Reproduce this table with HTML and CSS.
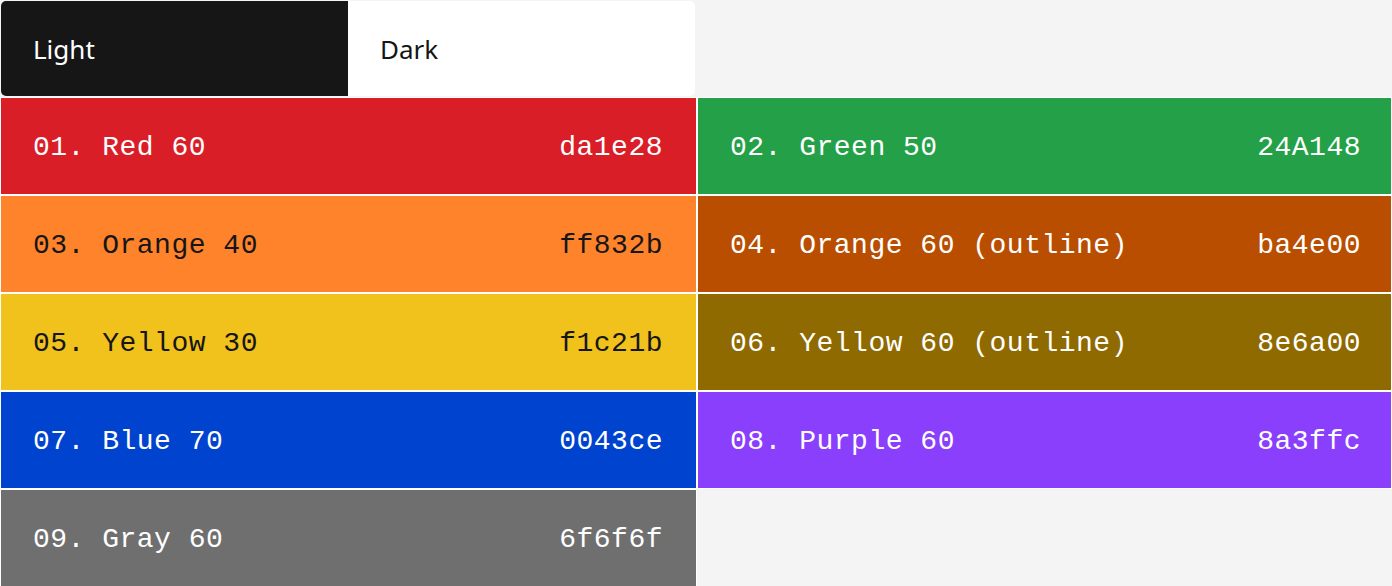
FILE: index.html
```html
<!DOCTYPE html>
<html>
<head>
<meta charset="utf-8">
<link rel="stylesheet" href="styles.css">
</head>
<body>
<div class="page">
  <div class="tabs">
    <div class="tab tab-selected">Light</div>
    <div class="tab">Dark</div>
  </div>
  <div class="grid">
    <div class="swatch red"><span>01. Red 60</span><span>da1e28</span></div>
    <div class="swatch green"><span>02. Green 50</span><span>24A148</span></div>
    <div class="swatch orange40 dark-text"><span>03. Orange 40</span><span>ff832b</span></div>
    <div class="swatch orange60"><span>04. Orange 60 (outline)</span><span>ba4e00</span></div>
    <div class="swatch yellow30 dark-text"><span>05. Yellow 30</span><span>f1c21b</span></div>
    <div class="swatch yellow60"><span>06. Yellow 60 (outline)</span><span>8e6a00</span></div>
    <div class="swatch blue"><span>07. Blue 70</span><span>0043ce</span></div>
    <div class="swatch purple"><span>08. Purple 60</span><span>8a3ffc</span></div>
    <div class="swatch gray"><span>09. Gray 60</span><span>6f6f6f</span></div>
  </div>
</div>
</body>
</html>
```

FILE: styles.css
```css
html, body {
  margin: 0;
  padding: 0;
  background: #f4f4f4;
}
.page {
  width: 1392px;
  padding-top: 1px;
}
.tabs {
  display: flex;
  width: 694px;
  height: 95px;
  margin-left: 1px;
  border-radius: 5px;
  overflow: hidden;
  background: #ffffff;
}
.tab {
  flex: 1;
  display: flex;
  align-items: center;
  padding-left: 32px;
  font-family: "Noto Sans", "Liberation Sans", sans-serif;
  font-size: 26px;
  color: #161616;
}
.tab-selected {
  background: #161616;
  color: #ffffff;
}
.grid {
  display: grid;
  grid-template-columns: 697px 695px;
  margin-top: 1px;
}
.swatch {
  box-sizing: content-box;
  border: 1px solid #ffffff;
  display: flex;
  align-items: center;
  justify-content: space-between;
  padding: 2px 33px 0 32px;
  height: 94px;
  font-family: "Liberation Mono", "DejaVu Sans Mono", monospace;
  font-size: 28px;
  letter-spacing: 0.5px;
  color: #ffffff;
}
.swatch:nth-child(even) {
  padding-right: 30px;
}
.dark-text { color: #161616; }
.red { background: #da1e28; }
.green { background: #24a148; }
.orange40 { background: #ff832b; }
.orange60 { background: #ba4e00; }
.yellow30 { background: #f1c21b; }
.yellow60 { background: #8e6a00; }
.blue { background: #0043ce; }
.purple { background: #8a3ffc; }
.gray { background: #6f6f6f; }
```
